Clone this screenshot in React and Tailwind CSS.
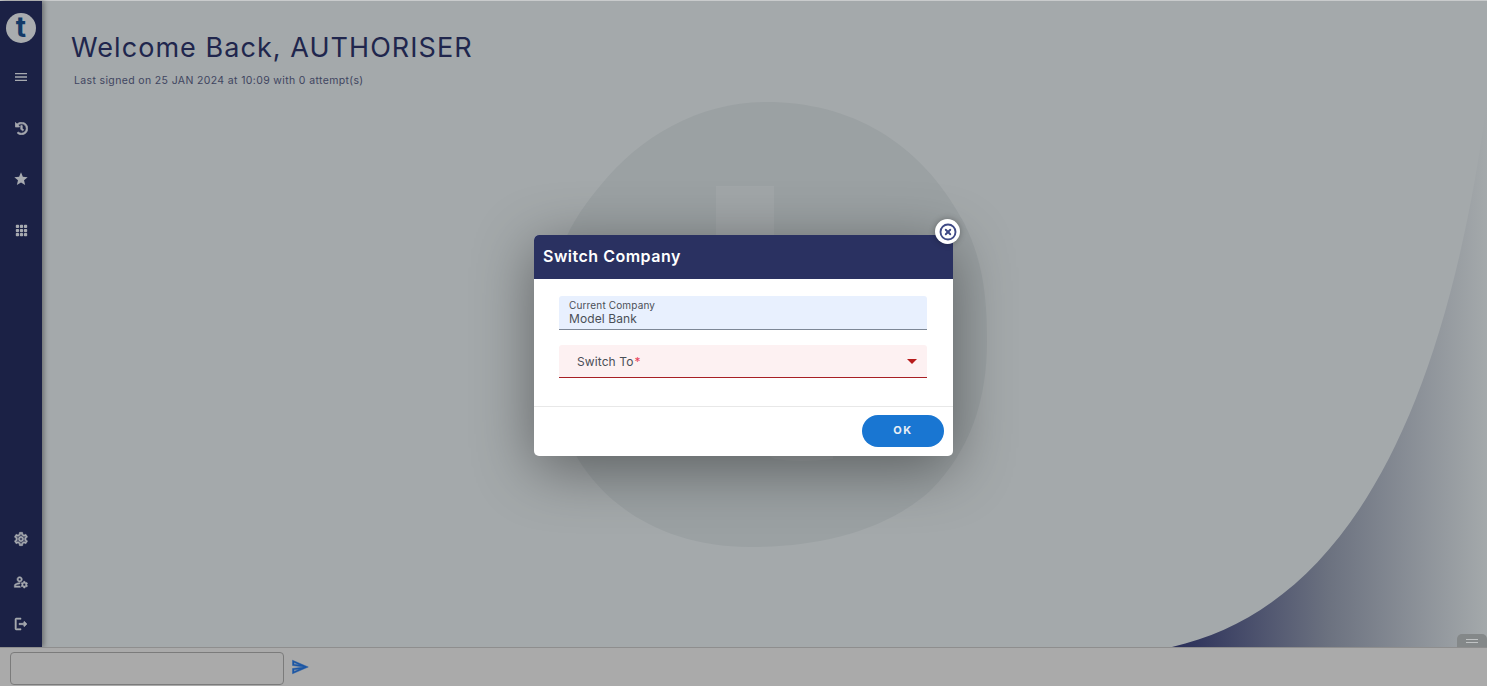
import { MdMenu, MdStar, MdOutlineSettings, MdOutlineManageAccounts, MdOutlineLogout, MdOutlineSend } from 'react-icons/md';
import { FaHistory } from 'react-icons/fa';
import { BsGrid3X3GapFill } from 'react-icons/bs';
import { CircleX } from 'lucide-react';

const topIcons = [
  { key: 'menu', icon: MdMenu, size: 16 },
  { key: 'history', icon: FaHistory, size: 13, heavy: 24 },
  { key: 'star', icon: MdStar, size: 16 },
  { key: 'apps', icon: BsGrid3X3GapFill, size: 13 },
];

const bottomIcons = [
  { key: 'settings', icon: MdOutlineSettings },
  { key: 'user', icon: MdOutlineManageAccounts },
  { key: 'logout', icon: MdOutlineLogout },
];

function Sidebar() {
  return (
    <aside className="w-[42px] shrink-0 bg-[#1b2145] flex flex-col items-center shadow-[2px_0_5px_rgba(0,0,0,0.35)] z-10">
      <div className="w-[30px] h-[30px] mt-[12px] rounded-full bg-[#a9acaf] flex items-center justify-center">
        <span className="text-[28px] leading-none font-bold text-[#123a68] -mt-[3px]">t</span>
      </div>
      <div className="mt-[26px] flex flex-col gap-[35px] items-center">
        {topIcons.map(({ key, icon: Icon, size, heavy }) => (
          <div key={key} className="w-[16px] h-[16px] flex items-center justify-center text-[#a7aab0]">
            <Icon size={size} stroke="currentColor" strokeWidth={heavy || 0} />
          </div>
        ))}
      </div>
      <div className="mt-auto mb-[15px] flex flex-col gap-[26.5px] items-center">
        {bottomIcons.map(({ key, icon: Icon }) => (
          <Icon key={key} size={16} className="text-[#a7aab0] [&_path[fill=none]]:stroke-0" strokeWidth={0.8} />
        ))}
      </div>
    </aside>
  );
}

function Dialog() {
  return (
    <div className="absolute left-[534px] top-[235px] w-[419px] h-[221px] bg-white rounded-[5px] shadow-[0_12px_60px_rgba(0,0,0,0.42)] z-20 flex flex-col">
      <div className="h-[44px] bg-[#2a3161] rounded-t-[5px] flex items-center px-[9px] pb-[3px] text-white text-[16px] font-semibold tracking-[0.5px]">
        Switch Company
      </div>
      <div className="h-[128px] pl-[25px] pr-[26px] pt-[17px] border-b border-[#e8e8e8]">
        <div className="h-[34px] bg-[#e8f0fe] rounded-t-[3px] border-b border-[#7d8796] px-[10px] pt-[4px] text-[#4a4f57]">
          <div className="text-[10px] leading-[11px] tracking-[0.15px]">Current Company</div>
          <div className="text-[12px] leading-[15px] tracking-[0.1px]">Model Bank</div>
        </div>
        <div className="mt-[15px] h-[33px] bg-[#fdf1f2] rounded-t-[3px] border-b border-[#a82025] pl-[18px] pr-[10px] flex items-center justify-between text-[12px] text-[#4a4f57] tracking-[0.1px]">
          <span className="mt-[1px]">Switch To<span className="text-[#e8425a] ml-[1px]">*</span></span>
          <span className="w-0 h-0 border-l-[5px] border-r-[5px] border-t-[5px] border-l-transparent border-r-transparent border-t-[#b71c1c]" />
        </div>
      </div>
      <div className="flex-1 flex items-center justify-end pr-[9px] pb-[2px]">
        <button className="w-[82px] h-[32px] rounded-full bg-[#1976d2] text-[#e8eef5] text-[11px] font-bold tracking-[1.5px]">OK</button>
      </div>
      <div className="absolute -right-[7px] -top-[16px] w-[25px] h-[25px] rounded-full bg-white flex items-center justify-center shadow-[0_0_6px_rgba(0,0,0,0.3)]">
        <CircleX className="w-[18px] h-[18px] text-[#3f4a86]" strokeWidth={2.5} />
      </div>
    </div>
  );
}

export default function App() {
  return (
    <div className="relative w-[1487px] h-[686px] overflow-hidden flex flex-col bg-[#a4a9ab] font-['Inter','Liberation_Sans',sans-serif]">
      <div className="flex-1 flex min-h-0 border-t border-[#c9cbcc]">
        <Sidebar />
        <main className="relative flex-1 px-[29px] pt-[30px] bg-[#a4a9ab] overflow-hidden">
          <h1 className="relative z-[1] text-[27px] leading-[34px] text-[#20264d] tracking-[1.05px]">Welcome Back, AUTHORISER</h1>
          <p className="relative z-[1] mt-[9px] ml-[3px] text-[10.5px] leading-[14px] text-[#3f4560] tracking-[0.36px]">Last signed on 25 JAN 2024 at 10:09 with 0 attempt(s)</p>

          {/* watermark logo, svg origin is page (42,1) */}
          <svg className="absolute left-[458px] top-[60px]" width="530" height="500" viewBox="0 0 530 500">
            <path d="M266 41 C350 41 420 80 463 160 C484 200 487 240 487 280 C487 340 470 390 430 430 C385 470 320 486 250 486 C170 486 110 450 78 398 C58 360 48 320 48 270 C48 210 62 170 100 125 C140 75 200 41 266 41 Z" fill="#9ba1a3" />
            <rect x="216" y="125" width="58" height="200" fill="#a1a6a8" />
            <path d="M255 325 L333 325 L333 398 Q300 402 275 398 Q255 390 255 370 Z" fill="#a1a6a8" />
          </svg>

          {/* corner swoosh */}
          <svg className="absolute left-[1100px] top-[60px]" width="345" height="587" viewBox="0 0 345 587">
            <defs>
              <linearGradient id="swoosh" x1="0" y1="0" x2="1" y2="0">
                <stop offset="0" stopColor="#282d58" />
                <stop offset="0.5" stopColor="#6c7280" />
                <stop offset="1" stopColor="#a4a9ab" />
              </linearGradient>
            </defs>
            <path d="M30 586 C190 550 300 380 345 40 L345 586 Z" fill="url(#swoosh)" />
          </svg>

          <div className="absolute right-0 bottom-0 w-[30px] h-[13px] rounded-t-[5px] bg-[#848889] flex flex-col items-center justify-center gap-[2px]">
            <span className="w-[12px] h-px bg-[#c0c3c4]" />
            <span className="w-[12px] h-px bg-[#c0c3c4]" />
          </div>
        </main>
      </div>
      <footer className="h-[39px] shrink-0 bg-[#aaaaaa] border-t border-[#8e8e8e] flex items-center pl-[10px] relative z-10">
        <div className="w-[274px] h-[33px] mt-[3px] rounded-[4px] border border-[#7b7b7b]" />
        <MdOutlineSend size={18} className="ml-[7px] text-[#1c57a5] [&_path[fill=none]]:stroke-0" strokeWidth={0.6} />
      </footer>
      <Dialog />
    </div>
  );
}
